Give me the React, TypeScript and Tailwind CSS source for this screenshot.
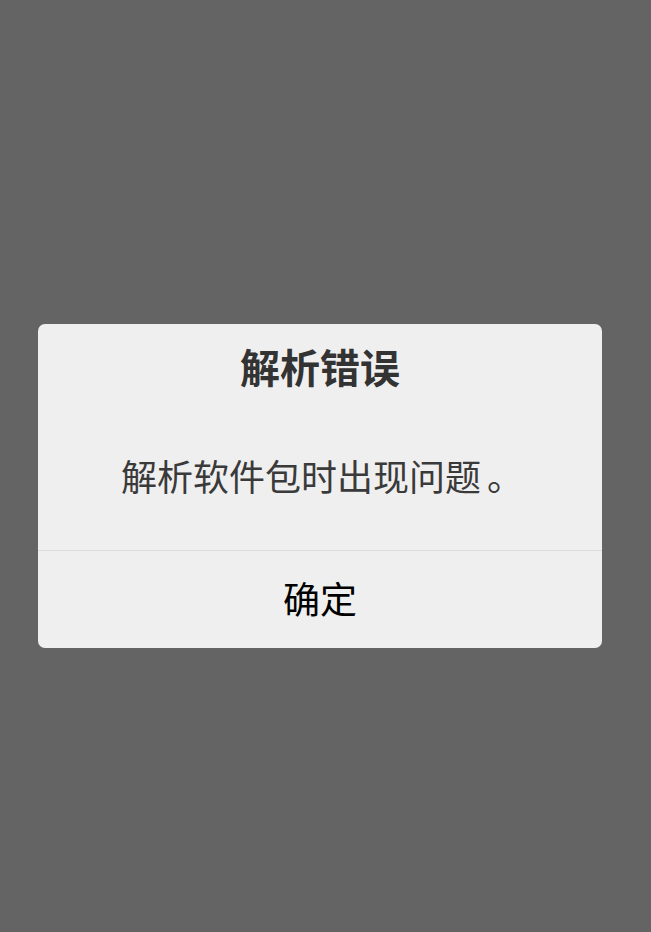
export default function App() {
  return (
    <div
      className="min-h-screen w-full bg-[#646464] flex flex-col pl-[38px] pt-[324px]"
      style={{ fontFamily: '"Noto Sans CJK SC", "Noto Sans", sans-serif' }}
    >
      <div className="w-[564px] bg-[#efefef] rounded-[7px] overflow-hidden flex flex-col">
        <div className="pt-[18px] text-center text-[40px] leading-[48px] font-bold text-[#333333]">
          解析错误
        </div>
        <div className="mt-[61px] mb-[51px] text-center text-[36px] leading-[48px] text-[#3a3a3a] pl-[4px]">
          解析软件包时出现问题<span className="pl-[6px]">。</span>
        </div>
        <div className="border-t border-[#dcdcdc] h-[98px] flex items-center justify-center text-[37px] text-black pb-[2px]">
          确定
        </div>
      </div>
    </div>
  );
}
